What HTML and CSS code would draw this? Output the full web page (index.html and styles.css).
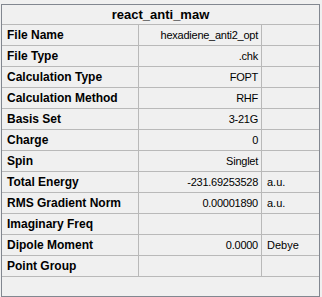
FILE: index.html
```html
<!DOCTYPE html>
<html lang="en">
<head>
  <meta charset="UTF-8">
  <title>react_anti_maw</title>
  <link rel="stylesheet" href="styles.css">
</head>
<body>
  <div class="panel">
    <div class="panel-title">react_anti_maw</div>
    <div class="prop-row"><div class="prop-name">File Name</div><div class="prop-value">hexadiene_anti2_opt</div><div class="prop-unit"></div></div>
    <div class="prop-row"><div class="prop-name">File Type</div><div class="prop-value">.chk</div><div class="prop-unit"></div></div>
    <div class="prop-row"><div class="prop-name">Calculation Type</div><div class="prop-value">FOPT</div><div class="prop-unit"></div></div>
    <div class="prop-row"><div class="prop-name">Calculation Method</div><div class="prop-value">RHF</div><div class="prop-unit"></div></div>
    <div class="prop-row"><div class="prop-name">Basis Set</div><div class="prop-value">3-21G</div><div class="prop-unit"></div></div>
    <div class="prop-row"><div class="prop-name">Charge</div><div class="prop-value">0</div><div class="prop-unit"></div></div>
    <div class="prop-row"><div class="prop-name">Spin</div><div class="prop-value">Singlet</div><div class="prop-unit"></div></div>
    <div class="prop-row"><div class="prop-name">Total Energy</div><div class="prop-value">-231.69253528</div><div class="prop-unit">a.u.</div></div>
    <div class="prop-row"><div class="prop-name">RMS Gradient Norm</div><div class="prop-value">0.00001890</div><div class="prop-unit">a.u.</div></div>
    <div class="prop-row"><div class="prop-name">Imaginary Freq</div><div class="prop-value"></div><div class="prop-unit"></div></div>
    <div class="prop-row"><div class="prop-name">Dipole Moment</div><div class="prop-value">0.0000</div><div class="prop-unit">Debye</div></div>
    <div class="prop-row"><div class="prop-name">Point Group</div><div class="prop-value"></div><div class="prop-unit"></div></div>
  </div>
</body>
</html>
```

FILE: styles.css
```css
body {
  margin: 0;
  background: #f0f0f0;
  font-family: "Liberation Sans", Arial, sans-serif;
  font-size: 11px;
  color: #000;
}

.panel {
  box-sizing: border-box;
  width: 319px;
  height: 293px;
  margin: 4px 0 0 1px;
  border: 1px solid #828790;
  background: #f0f0f0;
}

.panel-title {
  height: 19px;
  line-height: 19px;
  text-align: center;
  font-weight: bold;
  font-size: 13px;
  border-bottom: 1px solid #b9b9b9;
}

.prop-row {
  display: grid;
  grid-template-columns: 137px 123px 1fr;
  height: 21px;
  box-sizing: border-box;
  border-bottom: 1px solid #b9b9b9;
}

.prop-name,
.prop-value,
.prop-unit {
  box-sizing: border-box;
  line-height: 20px;
  white-space: nowrap;
  overflow: hidden;
}

.prop-name {
  padding-left: 5px;
  font-weight: bold;
  font-size: 12px;
  border-right: 1px solid #b9b9b9;
}

.prop-value {
  padding-right: 3px;
  text-align: right;
  letter-spacing: -0.25px;
  border-right: 1px solid #b9b9b9;
}

.prop-unit {
  padding-left: 5px;
}
```
